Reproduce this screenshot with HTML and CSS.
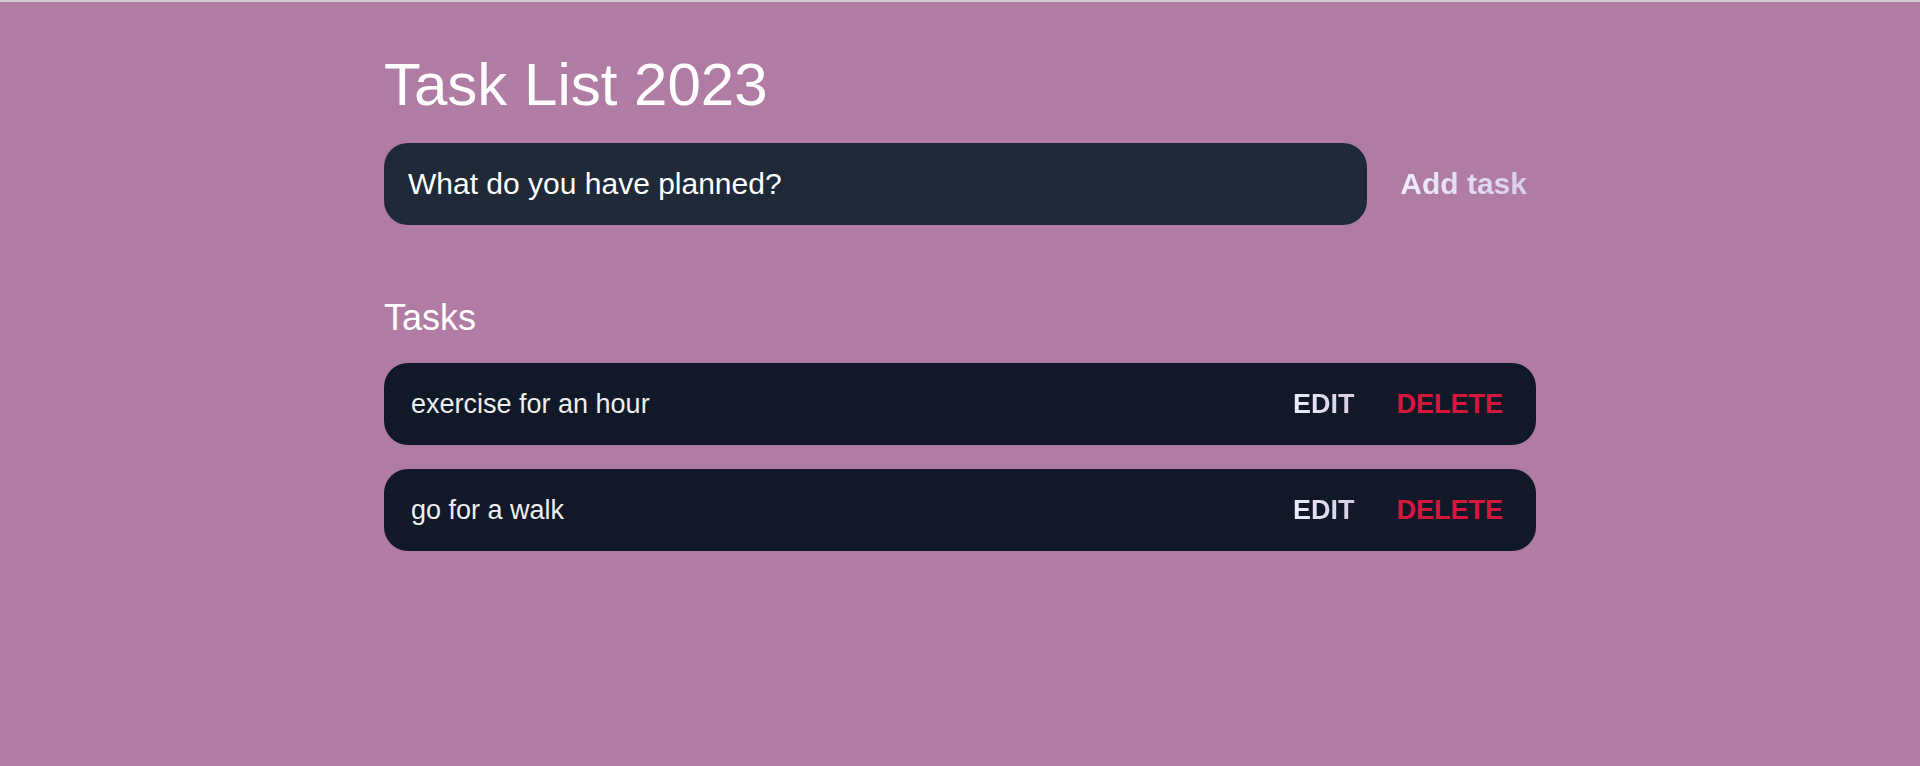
FILE: index.html
```html
<!DOCTYPE html>
<html lang="en">
<head>
<meta charset="utf-8">
<meta name="viewport" content="width=device-width, initial-scale=1">
<title>Task List 2023</title>
<link rel="stylesheet" href="styles.css">
</head>
<body>
<header class="header">
  <h1 class="title">Task List 2023</h1>
  <form class="new-task">
    <input class="new-task-input" type="text" placeholder="What do you have planned?" aria-label="What do you have planned?">
    <button class="new-task-submit" type="button">Add task</button>
  </form>
</header>
<main class="task-list">
  <h2 class="subtitle">Tasks</h2>
  <div class="tasks">
    <div class="task">
      <input class="task-text" type="text" value="exercise for an hour" aria-label="Task 1" readonly>
      <div class="actions">
        <button class="edit" type="button">Edit</button>
        <button class="delete" type="button">Delete</button>
      </div>
    </div>
    <div class="task">
      <input class="task-text" type="text" value="go for a walk" aria-label="Task 2" readonly>
      <div class="actions">
        <button class="edit" type="button">Edit</button>
        <button class="delete" type="button">Delete</button>
      </div>
    </div>
  </div>
</main>
</body>
</html>
```
FILE: styles.css
```css
* {
  box-sizing: border-box;
  margin: 0;
}

body {
  min-height: 100vh;
  border-top: 2px solid #cccccf;
  background: #b17ca3;
  color: #fff;
  font-family: "Liberation Sans", Arial, sans-serif;
}

input,
button {
  border: 0;
  padding: 0;
  background: none;
  color: inherit;
  font-family: inherit;
}

.header,
.task-list {
  width: 60%;
  margin: 0 auto;
}

.header {
  padding: 48px 0;
}

.title {
  margin-bottom: 24px;
  font-size: 60px;
  font-weight: 400;
  line-height: 69px;
}

.new-task {
  display: flex;
}

.new-task-input {
  flex: 1;
  min-width: 0;
  margin-right: 24px;
  padding: 24px;
  border-radius: 24px;
  background: #1f2937;
  font-size: 30px;
  line-height: 34px;
}

.new-task-input::placeholder {
  color: #fff;
  opacity: 1;
}

.new-task-submit {
  padding: 0 9px;
  background: linear-gradient(to right, #eff0fd, #d8cdea);
  background-clip: text;
  color: transparent;
  font-size: 30px;
  font-weight: 700;
}

.subtitle {
  padding: 24px 0;
  font-size: 36px;
  font-weight: 400;
  line-height: 42px;
}

.tasks {
  display: grid;
  gap: 24px;
}

.task {
  display: flex;
  align-items: center;
  padding: 24px;
  border-radius: 24px;
  background: #111827;
}

.task-text {
  flex: 1;
  min-width: 0;
  padding: 0 3px;
  color: #eee;
  font-size: 27px;
  line-height: 34px;
}

.actions {
  display: flex;
  gap: 24px;
}

.edit,
.delete {
  padding: 0 9px;
  font-size: 27px;
  font-weight: 700;
  line-height: 34px;
  text-transform: uppercase;
}

.edit {
  background: linear-gradient(to right, #eef2fd, #d3c8e2);
  background-clip: text;
  color: transparent;
}

.delete {
  color: #d6173d;
}
```
